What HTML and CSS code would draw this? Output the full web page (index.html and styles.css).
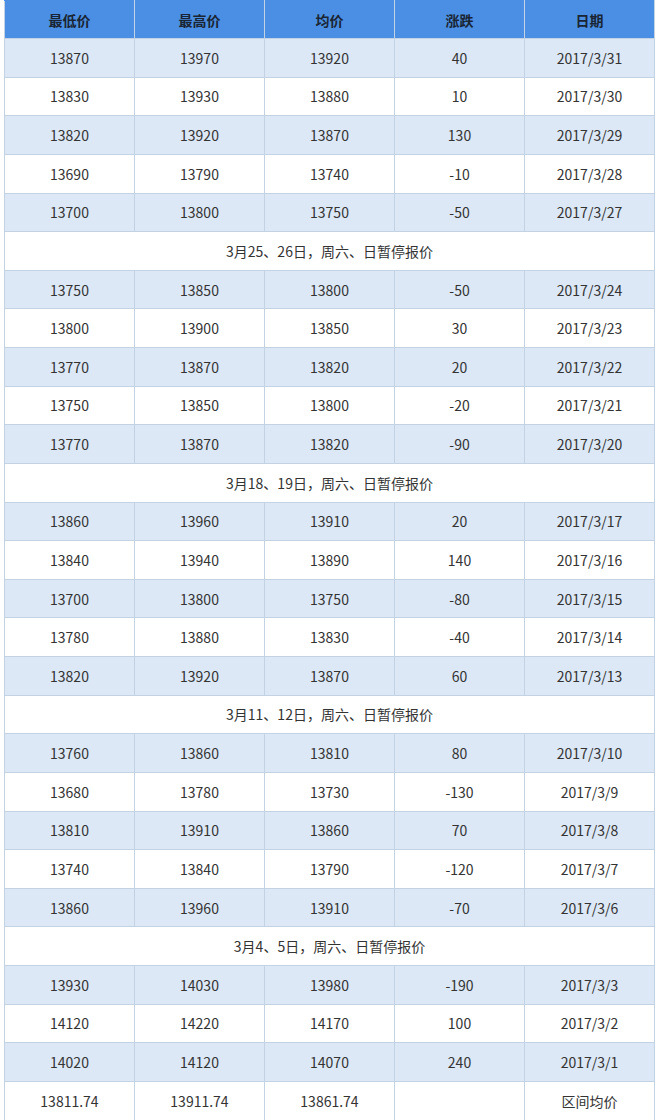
FILE: index.html
```html
<!DOCTYPE html>
<html lang="zh-CN">
<head>
<meta charset="utf-8">
<title>价格表</title>
<link rel="stylesheet" href="styles.css">
</head>
<body>
<table class="price-table">
  <thead>
    <tr><th>最低价</th><th>最高价</th><th>均价</th><th>涨跌</th><th>日期</th></tr>
  </thead>
  <tbody>
    <tr class="alt"><td>13870</td><td>13970</td><td>13920</td><td>40</td><td>2017/3/31</td></tr>
    <tr><td>13830</td><td>13930</td><td>13880</td><td>10</td><td>2017/3/30</td></tr>
    <tr class="alt"><td>13820</td><td>13920</td><td>13870</td><td>130</td><td>2017/3/29</td></tr>
    <tr><td>13690</td><td>13790</td><td>13740</td><td>-10</td><td>2017/3/28</td></tr>
    <tr class="alt"><td>13700</td><td>13800</td><td>13750</td><td>-50</td><td>2017/3/27</td></tr>
    <tr><td colspan="5">3月25、26日，周六、日暂停报价</td></tr>
    <tr class="alt"><td>13750</td><td>13850</td><td>13800</td><td>-50</td><td>2017/3/24</td></tr>
    <tr><td>13800</td><td>13900</td><td>13850</td><td>30</td><td>2017/3/23</td></tr>
    <tr class="alt"><td>13770</td><td>13870</td><td>13820</td><td>20</td><td>2017/3/22</td></tr>
    <tr><td>13750</td><td>13850</td><td>13800</td><td>-20</td><td>2017/3/21</td></tr>
    <tr class="alt"><td>13770</td><td>13870</td><td>13820</td><td>-90</td><td>2017/3/20</td></tr>
    <tr><td colspan="5">3月18、19日，周六、日暂停报价</td></tr>
    <tr class="alt"><td>13860</td><td>13960</td><td>13910</td><td>20</td><td>2017/3/17</td></tr>
    <tr><td>13840</td><td>13940</td><td>13890</td><td>140</td><td>2017/3/16</td></tr>
    <tr class="alt"><td>13700</td><td>13800</td><td>13750</td><td>-80</td><td>2017/3/15</td></tr>
    <tr><td>13780</td><td>13880</td><td>13830</td><td>-40</td><td>2017/3/14</td></tr>
    <tr class="alt"><td>13820</td><td>13920</td><td>13870</td><td>60</td><td>2017/3/13</td></tr>
    <tr><td colspan="5">3月11、12日，周六、日暂停报价</td></tr>
    <tr class="alt"><td>13760</td><td>13860</td><td>13810</td><td>80</td><td>2017/3/10</td></tr>
    <tr><td>13680</td><td>13780</td><td>13730</td><td>-130</td><td>2017/3/9</td></tr>
    <tr class="alt"><td>13810</td><td>13910</td><td>13860</td><td>70</td><td>2017/3/8</td></tr>
    <tr><td>13740</td><td>13840</td><td>13790</td><td>-120</td><td>2017/3/7</td></tr>
    <tr class="alt"><td>13860</td><td>13960</td><td>13910</td><td>-70</td><td>2017/3/6</td></tr>
    <tr><td colspan="5">3月4、5日，周六、日暂停报价</td></tr>
    <tr class="alt"><td>13930</td><td>14030</td><td>13980</td><td>-190</td><td>2017/3/3</td></tr>
    <tr><td>14120</td><td>14220</td><td>14170</td><td>100</td><td>2017/3/2</td></tr>
    <tr class="alt"><td>14020</td><td>14120</td><td>14070</td><td>240</td><td>2017/3/1</td></tr>
    <tr><td>13811.74</td><td>13911.74</td><td>13861.74</td><td></td><td>区间均价</td></tr>
  </tbody>
</table>
</body>
</html>
```
FILE: styles.css
```css
html, body {
  margin: 0;
  padding: 0;
  background: #ffffff;
}
body {
  font-family: "Noto Sans CJK SC", "Open Sans", sans-serif;
  color: #333333;
}
.price-table {
  margin-left: 4px;
  width: 651px;
  border-collapse: collapse;
  table-layout: fixed;
  font-size: 14px;
}
.price-table th,
.price-table td {
  border: 1px solid #c3d3e4;
  text-align: center;
  padding: 0;
  font-weight: normal;
  line-height: 20px;
}
.price-table thead tr {
  height: 38px;
}
.price-table th {
  background: #4a8fe3;
  color: #1a2533;
  font-weight: 700;
  border-top-color: #4a8fe3;
}
.price-table tbody tr {
  height: 38.64px;
}
.price-table tbody tr.alt td {
  background: #dce8f5;
}
```
